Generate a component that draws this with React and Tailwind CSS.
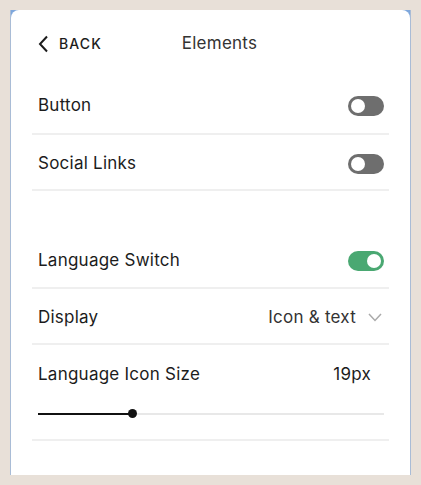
import React from "react";

const Toggle = ({ on }) => (
  <div
    className={`w-[36px] h-[20px] rounded-full flex items-center px-[3px] ${
      on ? "bg-[#4aa872] justify-end" : "bg-[#6e6e6e] justify-start"
    }`}
  >
    <div className="w-[14px] h-[14px] rounded-full bg-white" />
  </div>
);

const Sep = () => <div className="h-[2px] bg-[#efefef] mx-[21px]" />;

export default function App() {
  return (
    <div
      className="w-[421px] h-[485px] bg-[#e8e0d8] pt-[10px] pl-[10px]"
      style={{ fontFamily: "Inter, 'Noto Sans', sans-serif" }}
    >
      <div className="w-[401px] h-[465px] bg-[#7ea7dc] border-x border-[#a9bcd6]">
        <div className="w-full h-full bg-white rounded-t-[8px] text-[#1c1c1c] tracking-[0.015em]">
          {/* Header */}
          <div className="h-[67px] flex items-center relative px-[27px]">
            <div className="flex items-center gap-[10px]">
              <svg width="11" height="18" viewBox="0 0 11 18" fill="none">
                <path d="M9 1.5 L2 9 L9 16.5" stroke="#1c1c1c" strokeWidth="2" />
              </svg>
              <span className="text-[14px] font-medium tracking-[0.08em] text-[#1c1c1c]">BACK</span>
            </div>
            <div className="absolute left-[18px] right-0 top-0 bottom-0 flex items-center justify-center text-[17px] text-[#333] pointer-events-none">
              Elements
            </div>
          </div>

          <div className="h-[56px] flex items-center justify-between pl-[27px] pr-[26px] pt-[2px] text-[17px]">
            <span>Button</span>
            <Toggle />
          </div>
          <Sep />
          <div className="h-[54px] flex items-center justify-between pl-[27px] pr-[26px] pt-[3px] text-[17px]">
            <span>Social Links</span>
            <Toggle />
          </div>
          <Sep />
          <div className="h-[41px]" />
          <div className="h-[55px] flex items-center justify-between pl-[27px] pr-[26px] pt-[2px] text-[17px]">
            <span>Language Switch</span>
            <Toggle on />
          </div>
          <Sep />
          <div className="h-[54px] flex items-center justify-between pl-[27px] pr-[28px] pt-[3px] text-[17px]">
            <span>Display</span>
            <div className="flex items-center gap-[12px] text-[#333]">
              <span>Icon &amp; text</span>
              <svg width="14" height="9" viewBox="0 0 14 9" fill="none">
                <path d="M1 1 L7 7.5 L13 1" stroke="#aaaaaa" strokeWidth="1.5" />
              </svg>
            </div>
          </div>
          <Sep />
          <div className="h-[94px] pl-[27px] pr-[26px] pt-[17px] text-[17px]">
            <div className="flex items-center justify-between pr-[13px]">
              <span>Language Icon Size</span>
              <span>19px</span>
            </div>
            <div className="relative mt-[21px] h-[10px] flex items-center">
              <div className="w-full h-[2px] bg-[#e8e8e8]" />
              <div className="absolute left-0 w-[95px] h-[2px] bg-[#111]" />
              <div className="absolute left-[90px] w-[9px] h-[9px] rounded-full bg-[#111]" />
            </div>
          </div>
          <Sep />
        </div>
      </div>
    </div>
  );
}
